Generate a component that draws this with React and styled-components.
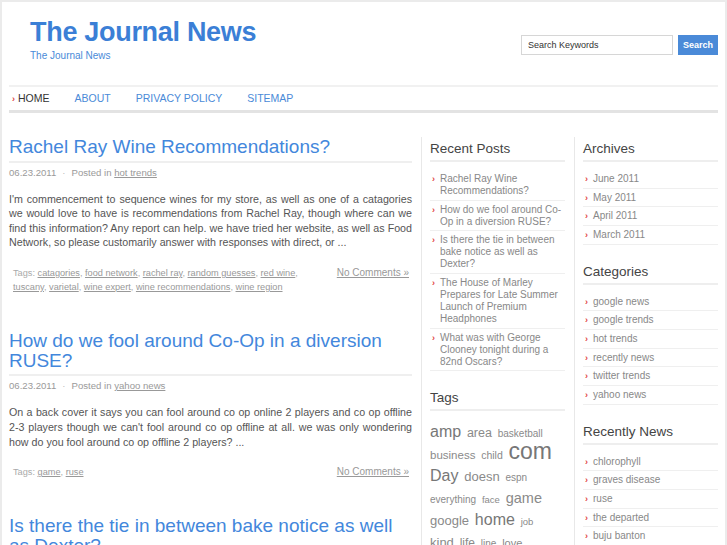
import styled, { createGlobalStyle } from 'styled-components';

const GlobalStyle = createGlobalStyle`
  body {
    margin: 0;
    background: #fff;
    font-family: "Liberation Sans", Arial, sans-serif;
  }
  a {
    text-decoration: none;
  }
`

const posts = [
  {
    title: 'Rachel Ray Wine Recommendations?',
    category: 'hot trends',
    body: "I'm commencement to sequence wines for my store, as well as one of a catagories we would love to have is recommendations from Rachel Ray, though where can we find this information? Any report can help. we have tried her website, as well as Food Network, so please customarily answer with responses with direct, or ...",
    tags: ['catagories', 'food network', 'rachel ray', 'random guesses', 'red wine', 'tuscany', 'varietal', 'wine expert', 'wine recommendations', 'wine region'],
  },
  {
    title: 'How do we fool around Co-Op in a diversion RUSE?',
    category: 'yahoo news',
    body: "On a back cover it says you can fool around co op online 2 players and co op offline 2-3 players though we can't fool around co op offline at all. we was only wondering how do you fool around co op offline 2 players? ...",
    tags: ['game', 'ruse'],
  },
  {
    title: 'Is there the tie in between bake notice as well as Dexter?',
    category: 'google news',
    body: 'Dexter fans have been wondering about this for a while now, and we thought it was worth a closer look at what the show has in common with the bake notice story ...',
    tags: ['dexter'],
  },
];

const recentPosts = [
  'Rachel Ray Wine Recommendations?',
  'How do we fool around Co-Op in a diversion RUSE?',
  'Is there the tie in between bake notice as well as Dexter?',
  'The House of Marley Prepares for Late Summer Launch of Premium Headphones',
  'What was with George Clooney tonight during a 82nd Oscars?',
];

const tags = [
  ['amp', 16], ['area', 12.5], ['basketball', 10],
  ['business', 11.5], ['child', 10.5], ['com', 23],
  ['Day', 16], ['doesn', 13], ['espn', 10],
  ['everything', 10], ['face', 9.5], ['game', 14.5],
  ['google', 13], ['home', 16], ['job', 9.5],
  ['kind', 13], ['life', 12], ['line', 10], ['love', 11],
  ['news', 15], ['people', 12], ['time', 11], ['video', 13],
];

const archives = ['June 2011', 'May 2011', 'April 2011', 'March 2011'];
const categories = ['google news', 'google trends', 'hot trends', 'recently news', 'twitter trends', 'yahoo news'];
const recentlyNews = ['chlorophyll', 'graves disease', 'ruse', 'the departed', 'buju banton', 'george clooney'];

function Widget({ title, children }) {
  return (
    <S_Widget>
      <WidgetTitle>{title}</WidgetTitle>
      {children}
    </S_Widget>
  );
}

function LinkList({ items }) {
  return (
    <List>
      {items.map((item) => (
        <ListItem key={item}>
          <Bullet>›</Bullet>
          <ListLink href="#">{item}</ListLink>
        </ListItem>
      ))}
    </List>
  );
}

function Post({ post }) {
  return (
    <S_Post>
      <PostTitle><a href="#">{post.title}</a></PostTitle>
      <Meta>
        06.23.2011<Dot>·</Dot>Posted in <MetaLink href="#">{post.category}</MetaLink>
      </Meta>
      <Body>{post.body}</Body>
      <PostFooter>
        <TagLine>
          Tags:{' '}
          {post.tags.map((t, i) => (
            <span key={t}>
              <MetaLink href="#">{t}</MetaLink>
              {i < post.tags.length - 1 ? ', ' : ''}
            </span>
          ))}
        </TagLine>
        <MetaLink href="#">No Comments »</MetaLink>
      </PostFooter>
    </S_Post>
  );
}

export default function App() {
  return (
    <>
      <GlobalStyle />
      <Page>
        <Header>
          <Brand>
            <SiteTitle href="#">The Journal News</SiteTitle>
            <Tagline>The Journal News</Tagline>
          </Brand>
          <SearchForm onSubmit={(e) => e.preventDefault()}>
            <SearchInput defaultValue="Search Keywords" />
            <SearchButton type="submit">Search</SearchButton>
          </SearchForm>
        </Header>
        <Nav>
          <NavItem href="#" $active>HOME</NavItem>
          <NavItem href="#">ABOUT</NavItem>
          <NavItem href="#">PRIVACY POLICY</NavItem>
          <NavItem href="#">SITEMAP</NavItem>
        </Nav>
        <Main>
          <Content>
            {posts.map((p) => <Post key={p.title} post={p} />)}
          </Content>
          <Sidebar>
            <Widget title="Recent Posts">
              <LinkList items={recentPosts} />
            </Widget>
            <Widget title="Tags">
              <Cloud>
                {tags.map(([t, size]) => (
                  <span key={t}>
                    <CloudTag href="#" $size={size}>{t}</CloudTag>{' '}
                  </span>
                ))}
              </Cloud>
            </Widget>
          </Sidebar>
          <Sidebar $last>
            <Widget title="Archives">
              <LinkList items={archives} />
            </Widget>
            <Widget title="Categories">
              <LinkList items={categories} />
            </Widget>
            <Widget title="Recently News">
              <LinkList items={recentlyNews} />
            </Widget>
          </Sidebar>
        </Main>
      </Page>
    </>
  );
}

const Page = styled.div`
  border: 2px solid #ebebeb;
  border-bottom: none;
  padding: 0 7px;
  overflow: hidden;
`
const Header = styled.header`
  display: flex;
  justify-content: space-between;
  align-items: flex-start;
  height: 83px;
  padding-left: 21px;
`
const Brand = styled.div`
  padding-top: 15px;
`
const SiteTitle = styled.a`
  display: block;
  font-size: 27px;
  font-weight: bold;
  line-height: 30px;
  letter-spacing: -0.3px;
  color: #3b7fd6;
`
const Tagline = styled.div`
  margin-top: 3px;
  font-size: 10px;
  color: #4a8ad8;
`
const SearchForm = styled.form`
  display: flex;
  gap: 5px;
  margin-top: 33px;
`
const SearchInput = styled.input`
  box-sizing: border-box;
  width: 152px;
  height: 20px;
  padding: 0 6px;
  border: 1px solid #d6d6d6;
  font-family: "Liberation Sans", Arial, sans-serif;
  font-size: 9px;
  color: #333;
  outline: none;
`
const SearchButton = styled.button`
  width: 40px;
  height: 20px;
  border: none;
  padding: 0;
  background: #4a8ad8;
  color: #fff;
  font-family: "Liberation Sans", Arial, sans-serif;
  font-size: 9px;
  font-weight: bold;
`
const Nav = styled.nav`
  display: flex;
  align-items: center;
  gap: 25px;
  height: 22px;
  padding-left: 3px;
  padding-bottom: 1px;
  border-top: 2px solid #f1f1f1;
  border-bottom: 3px solid #e3e3e3;
`
const NavItem = styled.a`
  font-size: 10.5px;
  color: ${(p) => (p.$active ? '#333' : '#4a8ad8')};
  &::before {
    content: ${(p) => (p.$active ? "'›'" : 'none')};
    color: #e24444;
    font-weight: bold;
    font-size: 9px;
    margin-right: 3px;
  }
`
const Main = styled.div`
  display: flex;
  align-items: flex-start;
  padding-top: 22px;
`
const Content = styled.div`
  flex: none;
  width: 403px;
  margin-right: 9px;
`
const S_Post = styled.article`
  margin-bottom: 35px;
`
const PostTitle = styled.h2`
  margin: 0;
  padding: 2px 0 3.5px;
  font-size: 19px;
  font-weight: normal;
  line-height: 20px;
  border-bottom: 2px solid #efefef;
  a {
    color: #4387dc;
  }
`
const Meta = styled.div`
  margin-top: 4px;
  font-size: 9.6px;
  line-height: 12px;
  color: #9a9a9a;
`
const Dot = styled.span`
  margin: 0 6px;
  color: #bbb;
`
const MetaLink = styled.a`
  color: #999;
  text-decoration: underline;
  white-space: nowrap;
`
const Body = styled.p`
  margin: 13px 0 0;
  font-size: 10.68px;
  line-height: 14.6px;
  color: #555;
  text-align: justify;
`
const PostFooter = styled.div`
  display: flex;
  align-items: flex-start;
  gap: 15px;
  margin-top: 16px;
  padding: 0 3px 0 4px;
  font-size: 10px;
  line-height: 14px;
  color: #aaa;
`
const TagLine = styled.div`
  flex: 1;
  font-size: 9.2px;
`
const Sidebar = styled.aside`
  flex: none;
  width: 135px;
  padding: 0 ${(p) => (p.$last ? '0' : '9px')} 0 8px;
  border-left: 1px solid #e8e8e8;
  margin-top: 2px;
`
const S_Widget = styled.section`
  margin-bottom: 15px;
`
const WidgetTitle = styled.h3`
  margin: 0;
  padding: 3px 0 2px;
  font-size: 13.5px;
  font-weight: normal;
  line-height: 18px;
  color: #444;
  border-bottom: 2px solid #eeeeee;
`
const List = styled.ul`
  list-style: none;
  margin: 8px 0 0;
  padding: 0;
`
const ListItem = styled.li`
  display: flex;
  padding: 3px 0 2.67px;
  border-bottom: 1px solid #efefef;
  font-size: 10px;
  line-height: 12px;
`
const Bullet = styled.span`
  flex: none;
  width: 10px;
  padding-left: 2px;
  box-sizing: border-box;
  color: #e24444;
  font-weight: bold;
  font-size: 9px;
  line-height: 12px;
`
const ListLink = styled.a`
  color: #888;
`
const Cloud = styled.div`
  margin-top: 12px;
  padding-right: 6px;
  font-size: 10px;
  line-height: 22px;
`
const CloudTag = styled.a`
  margin-right: 3px;
  line-height: 0;
  font-size: ${(p) => p.$size}px;
  color: ${(p) => (p.$size >= 16 ? '#777' : '#8a8a8a')};
`
